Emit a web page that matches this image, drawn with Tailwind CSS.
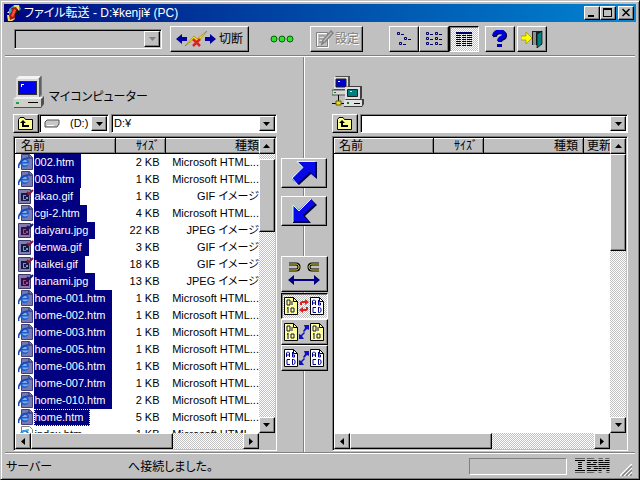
<!DOCTYPE html>
<html lang="ja">
  <head>
    <meta charset="UTF-8" />
    <meta name="viewport" content="width=device-width, initial-scale=1.0" />
    <title>ファイル転送</title>
    <script src="https://cdn.jsdelivr.net/npm/@tailwindcss/browser@4"></script>
  </head>

  <body class="h-screen overflow-hidden flex flex-col p-[3px] bg-[#c0c0c0] text-black text-[12px] leading-[17px] font-['Liberation_Sans','Noto_Sans_CJK_JP',sans-serif] [font-feature-settings:'palt'] border border-t-[#c0c0c0] border-l-[#c0c0c0] border-r-black border-b-black shadow-[inset_1px_1px_0_#fff,inset_-1px_-1px_0_#808080] select-none">
    <!-- icons -->
    <svg class="hidden">
      <symbol id="down" viewBox="0 0 7 4"><path d="M0 0h7L3.500 4z" /></symbol>
      <symbol id="up" viewBox="0 0 7 4"><path d="M0 4h7L3.500 0z" /></symbol>
      <symbol id="left" viewBox="0 0 4 7"><path d="M4 0v7L0 3.500z" /></symbol>
      <symbol id="right" viewBox="0 0 4 7"><path d="M0 0v7L4 3.500z" /></symbol>
      <symbol id="folder" viewBox="0 0 16 13">
        <path d="M.5 12.500v-10l1.500-2h4l1.500 2h7v10z" fill="#ffff90" stroke="#000" />
        <path d="M5 3L2 6h2v4h7V8H6V6h2z" fill="#000" />
      </symbol>
      <symbol id="htm" viewBox="0 0 16 16">
        <path d="M3.500.5h8l3 3v12h-11z" fill="#7878b0" stroke="#40407c" />
        <path d="M11 1v3h3" fill="#9898c8" stroke="#202060" />
        <circle cx="6.500" cy="8.500" r="4.500" fill="#1860d0" />
        <path d="M4 8c1-3 5-3 5 0zM4 9.500h7c-1 2-6 3-7 0z" fill="#88a8e8" />
        <path d="M1 14C-1 10 6 3 11 4" fill="none" stroke="#1848b0" stroke-width="1.500" />
      </symbol>
      <symbol id="htmPlain" viewBox="0 0 16 16">
        <path d="M3.500.5h8l3 3v12h-11z" fill="#fff" stroke="#808080" />
        <circle cx="6.500" cy="8.500" r="4.500" fill="#1878d8" />
        <path d="M4 8c1-3 5-3 5 0zM4 9.500h7c-1 2-6 3-7 0z" fill="#fff" />
        <path d="M1 14C-1 10 6 3 11 4" fill="none" stroke="#38a0e8" stroke-width="1.500" />
      </symbol>
      <symbol id="gif" viewBox="0 0 16 16">
        <path d="M.5 1.500h12v14H.5z" fill="#8080b0" stroke="#38386c" />
        <path d="M3 5h8v8H3z" fill="#181848" />
        <path d="M5 7h3v1H6v3h2V9h2v2H8v1H5z" fill="#70a0b0" />
        <path d="M9 4l2 2 4-4" fill="none" stroke="#901838" stroke-width="2" />
      </symbol>
      <symbol id="jpg" viewBox="0 0 16 16">
        <path d="M.5 1.500h12v14H.5z" fill="#8878b0" stroke="#38386c" />
        <path d="M3 5h8v8H3z" fill="#301048" />
        <path d="M5 7h3v1H6v3h2V9h2v2H8v1H5z" fill="#b04880" />
        <path d="M9 4l2 2 4-4" fill="none" stroke="#18186c" stroke-width="2" />
      </symbol>
      <symbol id="pc" viewBox="0 0 32 32">
        <path d="M5 3l3-3h21v19l-3 3H5z" fill="#808080" />
        <path d="M3 3h23v18H3z" fill="#d8d8d8" />
        <path d="M3 3l3-3h22l-3 3z" fill="#f4f4f4" />
        <path d="M28 0v18l-2 3V3z" fill="#606060" />
        <path d="M5 5h19v14H5z" fill="#303030" />
        <path d="M6 6h17v12H6z" fill="#0000f0" />
        <path d="M8 8h3v1H8zM8 8h1v3H8z" fill="#fff" />
        <path d="M0 23l3-2h28l-3 2z" fill="#f0f0f0" />
        <path d="M0 23h28v8H0z" fill="#d0d0c8" />
        <path d="M28 23l3-3v8l-3 4H1v-1h27z" fill="#505050" />
        <path d="M3 26h3v2H3z" fill="#20a040" />
        <path d="M15 26h10v1H15z" fill="#000" />
      </symbol>
      <symbol id="page10" viewBox="0 0 14 18">
        <path d="M.5.5h9l4 4v13H.5z" fill="#ffff98" stroke="#000" />
        <path d="M9.500.5v4h4" fill="none" stroke="#000" />
        <path d="M3 3h3v5H3zM8 4v4M4 10v6M3 11h1M7 11h3v4H7z" fill="none" stroke="#101050" />
      </symbol>
      <symbol id="pageAb" viewBox="0 0 14 18">
        <path d="M.5.5h9l4 4v13H.5z" fill="#fff" stroke="#000" />
        <path d="M9.500.5v4h4" fill="none" stroke="#000" />
        <path d="M2.500 8V4l1-1h1l1 1v4M3 6h3M8.500 3v5h2V6h-2M6 10.500H3v5h3M8.500 10v5.500h1l1.500-1v-3l-1.500-1h-1" fill="none" stroke="#000090" />
      </symbol>
      <symbol id="swap" viewBox="0 0 10 16">
        <path d="M5 1h5v5L8 5 5 8 4 7l2-3zM0 15v-5l2 1 3-3 1 1-3 3 2 3z" fill="currentColor" />
      </symbol>
      <symbol id="swapRed" viewBox="0 0 10 16">
        <path d="M1 7V4l2-1h3V1l4 3-4 3V5H3v2zM9 9v3l-2 1H4v2l-4-3 4-3v2h3V9z" fill="#e02020" />
      </symbol>
    </svg>

    <!-- title bar -->
    <header class="h-[18px] shrink-0 flex items-center pl-[2px] pr-[2px] bg-linear-to-r from-[#000080] to-[#1084d0] text-white">
      <svg class="w-4 h-4 mr-[2px]" viewBox="0 0 16 16">
        <path d="M3 4l5-4h5l2 4-4 4H6L3 12z" fill="#30a8c0" />
        <path d="M8 0h5v5l-4 2zM1 10h5l3 4-3 2H2z" fill="#f0e060" />
        <path d="M5 3l5-1 2 3-3 4v4l-5 2-1-5 3-4z" fill="#a01818" />
        <path d="M8 4l2 1-3 7-2-1z" fill="#ff5038" />
        <path d="M11 4l3 3-1 4-3-3z" fill="#101010" />
        <path d="M1 8l2-2v2z" fill="#fff" />
      </svg>
      <h1 class="flex-1">ファイル転送 - D:¥kenji¥ (PC)</h1>
      <button aria-label="最小化" class="w-4 h-[14px] bg-[#c0c0c0] border border-t-white border-l-white border-r-black border-b-black shadow-[inset_-1px_-1px_0_#808080]">
        <svg class="w-[14px] h-3" viewBox="0 0 14 12"><path d="M3 8h6v2H3z" /></svg>
      </button>
      <button aria-label="最大化" class="w-4 h-[14px] bg-[#c0c0c0] border border-t-white border-l-white border-r-black border-b-black shadow-[inset_-1px_-1px_0_#808080]">
        <svg class="w-[14px] h-3" viewBox="0 0 14 12"><path d="M2 1h9v9H2zM3 3v6h7V3z" fill-rule="evenodd" /></svg>
      </button>
      <button aria-label="閉じる" class="w-4 h-[14px] ml-[2px] bg-[#c0c0c0] border border-t-white border-l-white border-r-black border-b-black shadow-[inset_-1px_-1px_0_#808080]">
        <svg class="w-[14px] h-3" viewBox="0 0 14 12"><path d="M3.500 2l7 7M10.500 2l-7 7" stroke="#000" stroke-width="1.500" /></svg>
      </button>
    </header>

    <!-- toolbar -->
    <nav class="h-[35px] shrink-0 flex items-center pl-[9px] mx-px border-b border-b-white shadow-[inset_0_-1px_0_#808080]">
      <div class="w-[148px] h-[20px] flex p-px border border-t-[#808080] border-l-[#808080] border-r-white border-b-white shadow-[inset_1px_1px_0_#000]">
        <select aria-label="接続先" disabled class="appearance-none flex-1 min-w-0"><option></option></select>
        <span class="w-4 flex items-center justify-center border border-t-white border-l-white border-r-black border-b-black shadow-[inset_-1px_-1px_0_#808080]">
          <svg class="w-[7px] h-1 fill-[#808080]"><use href="#down" /></svg>
        </span>
      </div>
      <button class="w-[79px] h-[26px] ml-2 pl-[5px] flex items-center gap-[3px] border border-t-white border-l-white border-r-black border-b-black shadow-[inset_-1px_-1px_0_#808080]">
        <svg class="w-10 h-4 shrink-0" viewBox="0 0 40 16">
          <path d="M0 8l6-5v3h5v4H6v3zM40 8l-6-5v3h-5v4h5v3z" fill="#0000a0" />
          <path d="M9 15l9-10 3 3L31 0 21 12l-3-4z" fill="#ffe800" stroke="#806000" stroke-width=".5" />
          <path d="M17 8l7 7M24 8l-7 7" stroke="#e02020" stroke-width="2.500" />
        </svg>
        切断
      </button>
      <svg class="w-6 h-2 ml-[21px]" viewBox="0 0 24 8" fill="#30e030" stroke="#006000">
        <circle cx="4" cy="4" r="3" /><circle cx="12" cy="4" r="3" /><circle cx="20" cy="4" r="3" />
      </svg>
      <button disabled class="w-[53px] h-[26px] ml-4 pl-1 flex items-center gap-px text-[#808080] [text-shadow:1px_1px_0_#fff] border border-t-white border-l-white border-r-black border-b-black shadow-[inset_-1px_-1px_0_#808080]">
        <svg class="w-[19px] h-[18px] shrink-0" viewBox="0 0 19 18" fill="none">
          <path d="M2.500 3.500h11v14h-11zM5 7h6M5 10h4" stroke="#fff" />
          <path d="M1.500 2.500h11v14h-11zM4 6h6M4 9h4M4 12h3" stroke="#808080" />
          <path d="M7 14l1-4 8-9 2 2-8 9z" fill="#c0c0c0" stroke="#808080" stroke-width="1.500" />
        </svg>
        設定
      </button>
      <div class="flex ml-[26px]">
        <button aria-label="小さいアイコン" class="w-[30px] h-[26px] flex items-center justify-center border border-t-white border-l-white border-r-black border-b-black shadow-[inset_-1px_-1px_0_#808080]">
          <svg class="w-4 h-[14px]" viewBox="0 0 16 14" fill="none" stroke="#000060"><path d="M1.500.5h2v2h-2zM5 2.500h3M8.500 5.500h2v2h-2zM12 7.500h3M3.500 10.500h2v2h-2zM7 12.500h3" /></svg>
        </button>
        <button aria-label="一覧" class="w-[30px] h-[26px] flex items-center justify-center border border-t-white border-l-white border-r-black border-b-black shadow-[inset_-1px_-1px_0_#808080]">
          <svg class="w-4 h-[14px]" viewBox="0 0 16 14" fill="none" stroke="#000060"><path d="M.5.5h2v2h-2zM4 2.500h3M.5 5.500h2v2h-2zM4 7.500h3M.5 10.500h2v2h-2zM4 12.500h3M9.500.5h2v2h-2zM13 2.500h3M9.500 5.500h2v2h-2zM13 7.500h3M9.500 10.500h2v2h-2zM13 12.500h3" /></svg>
        </button>
        <button aria-label="詳細" class="w-[30px] h-[26px] flex items-center justify-center bg-[repeating-conic-gradient(#fff_0_25%,#c0c0c0_0_50%)] bg-[length:2px_2px] border border-t-black border-l-black border-r-white border-b-white shadow-[inset_1px_1px_0_#808080]">
          <svg class="w-4 h-[14px]" viewBox="0 0 16 14">
            <path d="M0 0h16v2H0z" fill="#000060" />
            <path d="M0 3.500h16M0 5.500h16M0 7.500h16M0 9.500h16M0 11.500h16M0 13.500h16" stroke="#000" stroke-dasharray="5 1 4 1 5" />
          </svg>
        </button>
      </div>
      <button aria-label="ヘルプ" class="w-[30px] h-[26px] ml-[6px] flex items-center justify-center border border-t-white border-l-white border-r-black border-b-black shadow-[inset_-1px_-1px_0_#808080]">
        <svg class="w-4 h-[18px]" viewBox="0 0 16 18">
          <path d="M3 7c-1-6 11-6 10-1 0 3-5 2-5 6" fill="none" stroke="#000040" stroke-width="4" />
          <path d="M2 6c0-6 11-6 10-1 0 3-5 2-5 6" fill="none" stroke="#0000d8" stroke-width="4" />
          <path d="M5 14h5v3H5z" fill="#0000a0" />
        </svg>
      </button>
      <button aria-label="終了" class="w-[30px] h-[26px] ml-[2px] flex items-center justify-center border border-t-white border-l-white border-r-black border-b-black shadow-[inset_-1px_-1px_0_#808080]">
        <svg class="w-[22px] h-[18px]" viewBox="0 0 22 18">
          <path d="M11 1h10v14H11z" fill="#202020" />
          <path d="M12 2h3v13h-3z" fill="#909090" />
          <path d="M16 4l5-3v13l-5 4z" fill="#008080" stroke="#000" stroke-width=".7" />
          <path d="M0 6h5V2l6 6-6 6v-4H0z" fill="#ffff00" stroke="#909000" stroke-width=".7" />
        </svg>
      </button>
    </nav>

    <main class="flex-1 min-h-0 flex">
      <!-- local side -->
      <section class="flex-[272] min-w-0 flex flex-col pl-[9px] pt-[19px] pb-px">
        <div class="flex items-end gap-1 h-8">
          <svg class="w-8 h-8"><use href="#pc" /></svg>
          <h2 class="mb-[2px]">マイコンピューター</h2>
        </div>
        <div class="flex h-[19px] mt-[6px] mb-[3px]">
          <button aria-label="上へ" class="w-[26px] flex items-center justify-center border border-t-white border-l-white border-r-black border-b-black shadow-[inset_-1px_-1px_0_#808080]">
            <svg class="w-4 h-[13px]"><use href="#folder" /></svg>
          </button>
          <div class="w-[70px] flex items-center p-px bg-white border border-t-[#808080] border-l-[#808080] border-r-white border-b-white shadow-[inset_1px_1px_0_#000]">
            <svg class="w-4 h-[9px] ml-[3px] shrink-0" viewBox="0 0 16 9">
              <path d="M1 3l2-2h12v4l-2 3H1z" fill="#c8c8c8" stroke="#505050" />
              <path d="M3 6.500h7" stroke="#fff" />
            </svg>
            <select aria-label="ドライブ" class="appearance-none flex-1 min-w-0 h-[15px] leading-[15px] pl-[10px] text-[11px]"><option>(D:)</option></select>
            <span class="w-4 h-[15px] flex items-center justify-center bg-[#c0c0c0] border border-t-white border-l-white border-r-black border-b-black shadow-[inset_-1px_-1px_0_#808080] pointer-events-none">
              <svg class="w-[7px] h-1"><use href="#down" /></svg>
            </span>
          </div>
          <div class="flex-1 min-w-0 flex items-center ml-[2px] p-px bg-white border border-t-[#808080] border-l-[#808080] border-r-white border-b-white shadow-[inset_1px_1px_0_#000]">
            <select aria-label="フォルダ" class="appearance-none flex-1 min-w-0 h-[15px] leading-[15px] pl-px text-[11px]"><option>D:¥</option></select>
            <span class="w-4 h-[15px] flex items-center justify-center bg-[#c0c0c0] border border-t-white border-l-white border-r-black border-b-black shadow-[inset_-1px_-1px_0_#808080] pointer-events-none">
              <svg class="w-[7px] h-1"><use href="#down" /></svg>
            </span>
          </div>
        </div>
        <div class="flex-1 min-h-0 flex flex-col p-px bg-[#c0c0c0] border border-t-[#808080] border-l-[#808080] border-r-white border-b-white shadow-[inset_1px_1px_0_#000]">
          <div class="flex-1 min-h-0 flex">
            <div class="flex-1 min-w-0 overflow-hidden bg-white">
              <table class="w-full table-fixed">
                <thead>
                  <tr class="h-[15px] leading-[13px] bg-[#c0c0c0]">
                    <th class="w-[100px] p-0 pl-[5px] text-left font-normal border border-t-white border-l-white border-r-black border-b-black shadow-[inset_-1px_-1px_0_#808080]">名前</th>
                    <th class="w-[50px] p-0 pr-[5px] text-right font-normal border border-t-white border-l-white border-r-black border-b-black shadow-[inset_-1px_-1px_0_#808080]">ｻｲｽﾞ</th>
                    <th class="p-0 text-right font-normal border-t border-l border-b border-t-white border-l-white border-b-black shadow-[inset_0_-1px_0_#808080]">種類</th>
                  </tr>
                </thead>
                <tbody id="files" class="text-[11px]"></tbody>
              </table>
            </div>
            <div class="w-4 flex flex-col bg-[repeating-conic-gradient(#fff_0_25%,#c0c0c0_0_50%)] bg-[length:2px_2px]">
              <span class="h-4 flex items-center justify-center bg-[#c0c0c0] border border-t-white border-l-white border-r-black border-b-black shadow-[inset_-1px_-1px_0_#808080]"><svg class="w-[7px] h-1"><use href="#up" /></svg></span>
              <span class="h-[73px] mt-[5px] bg-[#c0c0c0] border border-t-white border-l-white border-r-black border-b-black shadow-[inset_-1px_-1px_0_#808080]"></span>
              <span class="h-4 mt-auto flex items-center justify-center bg-[#c0c0c0] border border-t-white border-l-white border-r-black border-b-black shadow-[inset_-1px_-1px_0_#808080]"><svg class="w-[7px] h-1"><use href="#down" /></svg></span>
            </div>
          </div>
          <div class="h-4 mr-4 flex bg-[repeating-conic-gradient(#fff_0_25%,#c0c0c0_0_50%)] bg-[length:2px_2px]">
            <span class="w-4 flex items-center justify-center bg-[#c0c0c0] border border-t-white border-l-white border-r-black border-b-black shadow-[inset_-1px_-1px_0_#808080]"><svg class="w-1 h-[7px]"><use href="#left" /></svg></span>
            <span class="w-[142px] bg-[#c0c0c0] border border-t-white border-l-white border-r-black border-b-black shadow-[inset_-1px_-1px_0_#808080]"></span>
            <span class="w-4 ml-auto flex items-center justify-center bg-[#c0c0c0] border border-t-white border-l-white border-r-black border-b-black shadow-[inset_-1px_-1px_0_#808080]"><svg class="w-1 h-[7px]"><use href="#right" /></svg></span>
          </div>
        </div>
      </section>

      <!-- transfer buttons, the divider runs behind them -->
      <div class="w-[55px] shrink-0 flex flex-col items-center pt-[101px] bg-[linear-gradient(to_right,#808080_50%,#fff_50%)] bg-[length:2px_100%] bg-center bg-no-repeat">
        <button aria-label="送信" class="w-[46px] h-[30px] flex items-center justify-center bg-[#c0c0c0] border border-t-white border-l-white border-r-black border-b-black shadow-[inset_-1px_-1px_0_#808080]">
          <svg class="w-7 h-[26px]" viewBox="0 0 28 26">
            <path d="M8 2h19v17l-6-5L9 25l-6-5L14 8z" fill="#000040" />
            <path d="M8 1h17v16l-5-5L7 24l-5-5L13 7z" fill="#0808e8" />
            <path d="M25 1.500H7l6 6L2 18l5 6" fill="none" stroke="#c0ffff" />
          </svg>
        </button>
        <button aria-label="受信" class="w-[46px] h-[30px] mt-2 flex items-center justify-center bg-[#c0c0c0] border border-t-white border-l-white border-r-black border-b-black shadow-[inset_-1px_-1px_0_#808080]">
          <svg class="w-7 h-[26px]" viewBox="0 0 28 26">
            <path d="M3 8l6 5L21 1l6 6-12 11 6 7H3z" fill="#000040" />
            <path d="M3 7l6 5L21 1l4 5-12 11 5 6H3z" fill="#0808e8" />
            <path d="M3 24V7l6 6L21 1" fill="none" stroke="#c0ffff" />
          </svg>
        </button>
        <button aria-label="同期" class="w-[47px] h-9 mt-[30px] flex items-center justify-center bg-[#c0c0c0] border border-t-white border-l-white border-r-black border-b-black shadow-[inset_-1px_-1px_0_#808080]">
          <svg class="w-9 h-6" viewBox="0 0 36 24" fill="none">
            <path d="M3 2h7c4 0 4 6 0 6H3M33 2h-7c-4 0-4 6 0 6h7" stroke="#000" stroke-width="3" />
            <path d="M3 2h7c4 0 4 6 0 6H3M33 2h-7c-4 0-4 6 0 6h7" stroke="#f0e850" />
            <path d="M2 18l6-5v4h20v-4l6 5-6 5v-4H8v4z" fill="#000080" />
          </svg>
        </button>
        <button aria-label="バイナリからテキスト" class="w-[47px] h-[26px] mt-px flex items-center justify-center gap-px bg-[repeating-conic-gradient(#fff_0_25%,#c0c0c0_0_50%)] bg-[length:2px_2px] border border-t-black border-l-black border-r-white border-b-white shadow-[inset_1px_1px_0_#808080]">
          <svg class="w-[14px] h-[18px]"><use href="#page10" /></svg>
          <svg class="w-[10px] h-4"><use href="#swapRed" /></svg>
          <svg class="w-[14px] h-[18px]"><use href="#pageAb" /></svg>
        </button>
        <button aria-label="バイナリ" class="w-[47px] h-[26px] flex items-center justify-center gap-px bg-[#c0c0c0] border border-t-white border-l-white border-r-black border-b-black shadow-[inset_-1px_-1px_0_#808080]">
          <svg class="w-[14px] h-[18px]"><use href="#page10" /></svg>
          <svg class="w-[10px] h-4 text-[#1010c0]"><use href="#swap" /></svg>
          <svg class="w-[14px] h-[18px]"><use href="#page10" /></svg>
        </button>
        <button aria-label="テキスト" class="w-[47px] h-[26px] flex items-center justify-center gap-px bg-[#c0c0c0] border border-t-white border-l-white border-r-black border-b-black shadow-[inset_-1px_-1px_0_#808080]">
          <svg class="w-[14px] h-[18px]"><use href="#pageAb" /></svg>
          <svg class="w-[10px] h-4 text-[#1010c0]"><use href="#swap" /></svg>
          <svg class="w-[14px] h-[18px]"><use href="#pageAb" /></svg>
        </button>
      </div>

      <!-- remote side -->
      <section class="flex-[305] min-w-0 flex flex-col pr-2 pt-[19px] pb-px">
        <svg class="w-8 h-8 shrink-0" viewBox="0 0 32 32">
          <path d="M2 2l2-2h14v12l-2 2H2z" fill="#505050" />
          <path d="M2 1h14v12H2z" fill="#e0e0e0" />
          <path d="M4 3h10v8H4z" fill="#0000c8" stroke="#202020" />
          <path d="M6 5h2v1H6z" fill="#fff" />
          <path d="M0 14h17v5H0z" fill="#d8d8d8" stroke="#505050" />
          <path d="M2 16h2v1H2z" fill="#008000" />
          <path d="M6.500 19v9M0 27.500h12" stroke="#000" />
          <path d="M4 25h5v4H4z" fill="#e8e020" stroke="#606000" />
          <path d="M14 12l2-2h14v12l-2 2H14z" fill="#404040" />
          <path d="M13 11h15v12H13z" fill="#e0e0e0" />
          <path d="M15.500 13.500h10v7h-10z" fill="#008080" stroke="#202020" />
          <path d="M18 15h2v1h-2z" fill="#fff" />
          <path d="M12 25l2-2h18v5l-2 3H12z" fill="#404040" />
          <path d="M12 24h18v6H12z" fill="#e0e0e0" />
          <path d="M15 26h2v2h-2z" fill="#008000" />
          <path d="M22 27h6v1h-6z" />
        </svg>
        <div class="flex h-[19px] mt-[6px] mb-[3px]">
          <button aria-label="上へ" class="w-[26px] flex items-center justify-center border border-t-white border-l-white border-r-black border-b-black shadow-[inset_-1px_-1px_0_#808080]">
            <svg class="w-4 h-[13px]"><use href="#folder" /></svg>
          </button>
          <div class="flex-1 min-w-0 flex items-center ml-[2px] p-px bg-white border border-t-[#808080] border-l-[#808080] border-r-white border-b-white shadow-[inset_1px_1px_0_#000]">
            <select aria-label="サーバーのフォルダ" class="appearance-none flex-1 min-w-0 h-[15px]"><option></option></select>
            <span class="w-4 h-[15px] flex items-center justify-center bg-[#c0c0c0] border border-t-white border-l-white border-r-black border-b-black shadow-[inset_-1px_-1px_0_#808080] pointer-events-none">
              <svg class="w-[7px] h-1"><use href="#down" /></svg>
            </span>
          </div>
        </div>
        <div class="flex-1 min-h-0 flex flex-col p-px bg-[#c0c0c0] border border-t-[#808080] border-l-[#808080] border-r-white border-b-white shadow-[inset_1px_1px_0_#000]">
          <div class="flex-1 min-h-0 flex">
            <div class="flex-1 min-w-0 overflow-hidden bg-white">
              <table class="w-full table-fixed">
                <thead>
                  <tr class="h-[15px] leading-[13px] bg-[#c0c0c0]">
                    <th class="w-[99px] p-0 pl-1 text-left font-normal border border-t-white border-l-white border-r-black border-b-black shadow-[inset_-1px_-1px_0_#808080]">名前</th>
                    <th class="w-[50px] p-0 pr-[5px] text-right font-normal border border-t-white border-l-white border-r-black border-b-black shadow-[inset_-1px_-1px_0_#808080]">ｻｲｽﾞ</th>
                    <th class="w-[100px] p-0 pr-[5px] text-right font-normal border border-t-white border-l-white border-r-black border-b-black shadow-[inset_-1px_-1px_0_#808080]">種類</th>
                    <th class="p-0 pl-[3px] text-left font-normal whitespace-nowrap border-t border-l border-b border-t-white border-l-white border-b-black shadow-[inset_0_-1px_0_#808080]">更新</th>
                  </tr>
                </thead>
              </table>
            </div>
            <div class="w-4 flex flex-col bg-[repeating-conic-gradient(#fff_0_25%,#c0c0c0_0_50%)] bg-[length:2px_2px]">
              <span class="h-4 flex items-center justify-center bg-[#c0c0c0] border border-t-white border-l-white border-r-black border-b-black shadow-[inset_-1px_-1px_0_#808080]"><svg class="w-[7px] h-1"><use href="#up" /></svg></span>
              <span class="h-[97px] bg-[#c0c0c0] border border-t-white border-l-white border-r-black border-b-black shadow-[inset_-1px_-1px_0_#808080]"></span>
              <span class="h-4 mt-auto flex items-center justify-center bg-[#c0c0c0] border border-t-white border-l-white border-r-black border-b-black shadow-[inset_-1px_-1px_0_#808080]"><svg class="w-[7px] h-1"><use href="#down" /></svg></span>
            </div>
          </div>
          <div class="h-4 mr-4 flex bg-[repeating-conic-gradient(#fff_0_25%,#c0c0c0_0_50%)] bg-[length:2px_2px]">
            <span class="w-4 flex items-center justify-center bg-[#c0c0c0] border border-t-white border-l-white border-r-black border-b-black shadow-[inset_-1px_-1px_0_#808080]"><svg class="w-1 h-[7px]"><use href="#left" /></svg></span>
            <span class="w-[142px] bg-[#c0c0c0] border border-t-white border-l-white border-r-black border-b-black shadow-[inset_-1px_-1px_0_#808080]"></span>
            <span class="w-4 ml-auto flex items-center justify-center bg-[#c0c0c0] border border-t-white border-l-white border-r-black border-b-black shadow-[inset_-1px_-1px_0_#808080]"><svg class="w-1 h-[7px]"><use href="#right" /></svg></span>
          </div>
        </div>
      </section>
    </main>

    <!-- status bar -->
    <footer class="h-6 shrink-0 flex items-center pl-px mx-px border-t border-t-[#808080] shadow-[inset_0_1px_0_#fff]">
      <span class="w-[122px] pt-[6px]">サーバー</span>
      <span class="flex-1 pt-[6px]">へ接続しました。</span>
      <span class="w-[98px] h-[17px] mt-1 border border-t-[#808080] border-l-[#808080] border-r-white border-b-white"></span>
      <span class="w-9 ml-[7px] mt-1 font-['Liberation_Mono',monospace] font-bold text-[20px] leading-[18px] text-transparent [-webkit-text-stroke:1px_transparent] bg-clip-text bg-[repeating-linear-gradient(#000_0_1px,transparent_1px_2px)]">IBM</span>
      <svg class="w-3 h-3 ml-[10px] mr-[3px] self-end" viewBox="0 0 12 12" stroke-width="1.500">
        <path d="M0 12L12 0M4 12l8-8M8 12l4-4" stroke="#fff" />
        <path d="M2 12L12 2M6 12l6-6M10 12l2-2" stroke="#808080" />
      </svg>
    </footer>
  </body>
  <script>
    const htm = "Microsoft HTML...";
    const gif = "GIF イメージ";
    const jpg = "JPEG イメージ";
    const files = [
      ["htm", "002.htm", 2, htm],
      ["htm", "003.htm", 1, htm],
      ["gif", "akao.gif", 1, gif],
      ["htm", "cgi-2.htm", 4, htm],
      ["jpg", "daiyaru.jpg", 22, jpg],
      ["gif", "denwa.gif", 3, gif],
      ["gif", "haikei.gif", 18, gif],
      ["jpg", "hanami.jpg", 13, jpg],
      ["htm", "home-001.htm", 1, htm],
      ["htm", "home-002.htm", 1, htm],
      ["htm", "home-003.htm", 1, htm],
      ["htm", "home-005.htm", 1, htm],
      ["htm", "home-006.htm", 1, htm],
      ["htm", "home-007.htm", 1, htm],
      ["htm", "home-010.htm", 2, htm],
      ["htm", "home.htm", 5, htm],
      ["htmPlain", "index.htm", 1, htm],
    ];
    let html = "";
    for (const [icon, name, size, type] of files) {
      let state = "bg-[#000080] text-white border-[#000080]";
      if (name == "home.htm") state = "bg-[#000080] text-white border-[#ffffc0] border-dotted";
      if (name == "index.htm") state = "border-transparent";
      html += `
        <tr class="h-[17px] leading-[15px]">
          <td class="p-0 pl-[2px]">
            <div class="flex h-[17px]">
              <svg class="w-4 h-4 shrink-0"><use href="#${icon}" /></svg>
              <span class="border pr-[6px] ${state}">${name}</span>
            </div>
          </td>
          <td class="p-0 pr-[6px] text-right">${size} KB</td>
          <td class="p-0 text-right whitespace-nowrap">${type}</td>
        </tr>`;
    }
    document.getElementById("files").innerHTML = html;
  </script>
</html>
